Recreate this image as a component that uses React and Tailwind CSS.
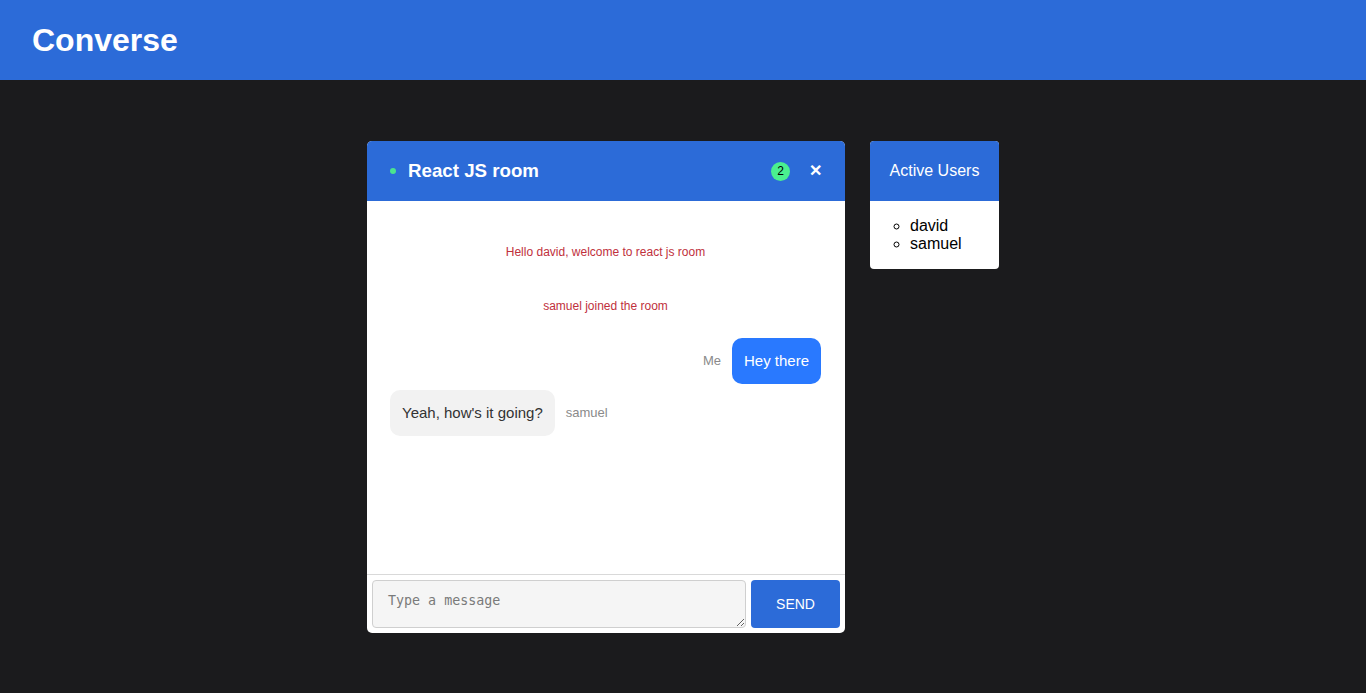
export default function App() {
  return (
    <div className="min-h-[693px] bg-[#1b1b1d]" style={{ fontFamily: "'Liberation Sans', Arial, sans-serif" }}>
      {/* ── Top bar ── */}
      <header className="h-20 bg-[#2c6bd8] flex items-center px-8">
        <h1 className="text-[32px] font-bold text-white leading-none">Converse</h1>
      </header>

      <div className="flex justify-center items-start gap-[25px] pt-[61px]">
        {/* ── Chat window ── */}
        <div className="w-[478px] h-[492px] bg-white rounded-[5px] overflow-hidden flex flex-col">
          <div className="h-[60px] shrink-0 bg-[#2c6bd8] flex items-center pl-[23px] pr-[23px]">
            <span className="w-[6px] h-[6px] rounded-full bg-[#4be38f]" />
            <h2 className="ml-[12px] text-[18.72px] font-bold text-white">React JS room</h2>
            <span className="ml-auto w-[19px] h-[19px] rounded-full bg-[#4af08f] text-black text-[12px] flex items-center justify-center">
              2
            </span>
            <button className="ml-[19px] text-white text-[16px] font-bold leading-none">✕</button>
          </div>

          <div className="flex-1 px-[24px] pl-[23px] pt-[42px]">
            <p className="text-center text-[12px] text-[#c0303c]">Hello david, welcome to react js room</p>
            <p className="text-center text-[12px] text-[#c0303c] mt-[36px]">samuel joined the room</p>

            <div className="flex items-center justify-end mt-[23px]">
              <span className="text-[13px] text-[#8a8a8a] mr-[11px]">Me</span>
              <div className="h-[46px] px-[12px] rounded-[10px] bg-[#2979ff] text-white text-[15px] flex items-center">
                Hey there
              </div>
            </div>

            <div className="flex items-center mt-[6px]">
              <div className="h-[46px] px-[12px] rounded-[10px] bg-[#f2f2f2] text-[#333] text-[15px] flex items-center">
                Yeah, how's it going?
              </div>
              <span className="text-[13px] text-[#8a8a8a] ml-[11px]">samuel</span>
            </div>
          </div>

          <div className="h-[59px] shrink-0 border-t border-[#d9d9d9] flex items-start gap-[5px] px-[5px] pt-[5px]">
            <textarea
              placeholder="Type a message"
              className="flex-1 h-[48px] rounded-[4px] border border-[#cfcfcf] bg-[#f5f5f5] px-[15px] pt-[12px] pb-[10px] text-[13.33px] leading-[16px] placeholder:text-[#7a7a7a] outline-none"
              style={{ fontFamily: "'DejaVu Sans Mono', monospace" }}
            />
            <button className="w-[89px] h-[48px] rounded-[4px] bg-[#2c6bd8] text-white text-[14px]">SEND</button>
          </div>
        </div>

        {/* ── Active users ── */}
        <div className="w-[129px] bg-white rounded-[4px] overflow-hidden">
          <div className="h-[60px] bg-[#2c6bd8] flex items-center justify-center text-white text-[16px]">
            Active Users
          </div>
          <ul className="list-[circle] pl-10 my-4 text-[16px] leading-[18px] text-black">
            <li>david</li>
            <li>samuel</li>
          </ul>
        </div>
      </div>
    </div>
  );
}
